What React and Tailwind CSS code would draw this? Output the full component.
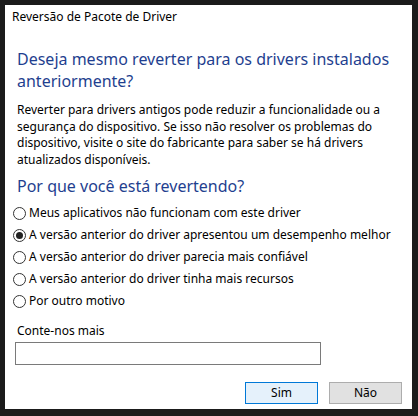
import React from 'react';

const options = [
  'Meus aplicativos não funcionam com este driver',
  'A versão anterior do driver apresentou um desempenho melhor',
  'A versão anterior do driver parecia mais confiável',
  'A versão anterior do driver tinha mais recursos',
  'Por outro motivo',
];

const Radio = ({ checked, label }) => (
  <label className="flex items-center h-[22px] gap-[3px]">
    <span className="w-[13px] h-[13px] rounded-full border border-[#333] bg-white flex items-center justify-center">
      {checked && <span className="w-[7px] h-[7px] rounded-full bg-[#222]" />}
    </span>
    <span>{label}</span>
  </label>
);

export default function App() {
  return (
    <div className="w-[418px] h-[416px] bg-[#1b1b1b] p-[5px] pb-[7px] pr-[6px]">
      <div
        className="w-full h-full bg-white text-[12px] text-black flex flex-col"
        style={{ fontFamily: '"Noto Sans", "Open Sans", sans-serif' }}
      >
        <div className="h-[23px] pl-[7px] pt-[4px] leading-[16px]">Reversão de Pacote de Driver</div>
        <div className="px-[12px] pt-[20px]">
          <h1 className="text-[16px] leading-[22px] text-[#1f3f8f]">
            Deseja mesmo reverter para os drivers instalados<br />anteriormente?
          </h1>
          <p className="mt-[10px] leading-[16.5px]">
            Reverter para drivers antigos pode reduzir a funcionalidade ou a<br />
            segurança do dispositivo. Se isso não resolver os problemas do<br />
            dispositivo, visite o site do fabricante para saber se há drivers<br />
            atualizados disponíveis.
          </p>
          <h2 className="mt-[7px] text-[16px] leading-[22px] text-[#1f3f8f]">Por que você está revertendo?</h2>
          <div className="mt-[5px] flex flex-col -ml-[4px]">
            {options.map((o, i) => (
              <Radio key={o} label={o} checked={i === 1} />
            ))}
          </div>
          <div className="mt-[11px] leading-[16px]">Conte-nos mais</div>
          <div className="mt-[3px] -ml-[2px] w-[306px] h-[23px] border border-[#7a7a7a]" />
        </div>
        <div className="flex justify-end gap-[11px] pr-[10px] mt-[17px]">
          <button className="w-[73px] h-[22px] bg-[#e5f1fb] border border-[#0078d7] text-[12px] leading-none">Sim</button>
          <button className="w-[73px] h-[22px] bg-[#e1e1e1] border border-[#adadad] text-[12px] leading-none">Não</button>
        </div>
      </div>
    </div>
  );
}
